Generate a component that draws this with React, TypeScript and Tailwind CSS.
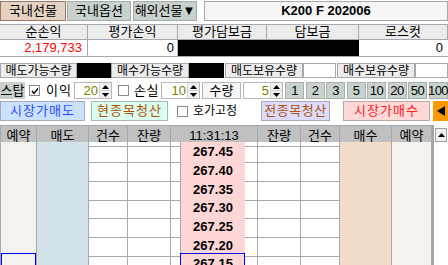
// 선물 주문 화면 — 상단 계좌 정보 + 호가 그리드

const FONT = "font-['Liberation_Sans','Noto_Sans_CJK_KR',sans-serif]"

const PRICES = ['267.45', '267.40', '267.35', '267.30', '267.25', '267.20', '267.15']
const ROW_H = ['h-[19px]', 'h-[19px]', 'h-[18px]', 'h-[19px]', 'h-[19px]', 'h-[18px]', 'h-[19px]']

const COLS =
  'grid grid-cols-[37px_52px_39px_43px_10px_64px_13px_43px_39px_52px_40px]'

function Check({ checked }: { checked?: boolean }) {
  return (
    <div className="w-[11px] h-[11px] shrink-0 border border-[#8a8a8a] bg-white flex items-center justify-center">
      {checked && (
        <svg width="8" height="8" viewBox="0 0 8 8">
          <path d="M1 4 L3 6.5 L7 1.5" fill="none" stroke="#000" strokeWidth="1.4" />
        </svg>
      )}
    </div>
  )
}

function Spin({ value, w }: { value: string; w: string }) {
  return (
    <div className={`flex h-[17px] shrink-0 border border-[#b8b8b8] bg-white ${w}`}>
      <div className="flex-1 text-right pr-[1px] text-[#808000] text-[13px] leading-[15px]">
        {value}
      </div>
      <div className="w-[12px] flex flex-col border-l border-[#d4d4d4] bg-[#f0f0f0]">
        <div className="flex-1 flex items-center justify-center">
          <svg width="7" height="4" viewBox="0 0 7 4">
            <path d="M0 4 L3.5 0 L7 4Z" fill="#000" />
          </svg>
        </div>
        <div className="flex-1 flex items-center justify-center border-t border-[#d4d4d4]">
          <svg width="7" height="4" viewBox="0 0 7 4">
            <path d="M0 0 L7 0 L3.5 4Z" fill="#000" />
          </svg>
        </div>
      </div>
    </div>
  )
}

function Label({ text, w }: { text: string; w: string }) {
  return (
    <div
      className={`h-full shrink-0 flex items-center justify-center whitespace-nowrap bg-[#ececec] border border-[#a8a8a8] ${w}`}
    >
      {text}
    </div>
  )
}

export default function App() {
  return (
    <div className={`w-[448px] h-[265px] overflow-hidden bg-white text-black text-[12px] ${FONT}`}>
      {/* 탭 + 종목 */}
      <div className="flex h-[21px] pt-[1px]">
        <div className="w-[66px] h-[20px] flex items-center justify-center bg-[#e6d2c2] border border-[#a07464] text-[13px]">
          국내선물
        </div>
        <div className="ml-[1px] w-[64px] h-[20px] flex items-center justify-center bg-[#c8d2cc] border border-[#a4aca8] text-[13px]">
          국내옵션
        </div>
        <div className="ml-[2px] w-[64px] h-[20px] flex items-center justify-center bg-[#c8d2cc] border border-[#a4aca8] text-[13px]">
          해외선물▼
        </div>
        <div className="ml-[7px] flex-1 h-[20px] flex items-center justify-center bg-[#f6f6f6] border border-[#a8a8a8] font-bold text-[13px]">
          K200 F 202006
        </div>
      </div>

      {/* 손익 요약 */}
      <div className="mt-[3px] grid grid-cols-[88px_90px_89px_92px_89px]">
        {['순손익', '평가손익', '평가담보금', '담보금', '로스컷'].map((t) => (
          <div
            key={t}
            className="h-[16px] flex items-center justify-center bg-[#ececec] border-t border-b border-r border-[#a8a8b4] text-[13px]"
          >
            {t}
          </div>
        ))}
        <div className="h-[17px] flex items-center justify-end pr-[5px] border-b border-r border-[#a8a8b4] text-[#ff0000] text-[13px]">
          2,179,733
        </div>
        <div className="h-[17px] flex items-center justify-end pr-[3px] border-b border-r border-[#a8a8b4] text-[13px]">
          0
        </div>
        <div className="h-[17px] col-span-2 bg-black border-b border-[#a8a8b4]" />
        <div className="h-[17px] flex items-center justify-end pr-[5px] border-b border-[#a8a8b4] text-[13px]">
          0
        </div>
      </div>

      {/* 수량 */}
      <div className="mt-[6px] flex h-[15px]">
        <Label text="매도가능수량" w="w-[77px]" />
        <div className="w-[34px] h-full bg-black" />
        <Label text="매수가능수량" w="w-[78px]" />
        <div className="w-[35px] h-full bg-black" />
        <Label text="매도보유수량" w="ml-[1px] w-[78px]" />
        <div className="w-[33px] h-full bg-white border border-[#a8a8a8]" />
        <Label text="매수보유수량" w="ml-[1px] w-[78px]" />
        <div className="flex-1 h-full bg-white border border-[#a8a8a8]" />
      </div>

      {/* 스탑 설정 */}
      <div className="mt-[4px] flex items-center h-[17px] whitespace-nowrap">
        <div className="w-[25px] h-full flex items-center justify-center bg-[#c8d2cc] text-[13px]">
          스탑
        </div>
        <div className="ml-[4px]">
          <Check checked />
        </div>
        <div className="ml-[6px] w-[28px] text-[13px] tracking-[1px]">이익</div>
        <Spin value="20" w="w-[38px]" />
        <div className="ml-[6px]">
          <Check />
        </div>
        <div className="ml-[5px] w-[27px] text-[13px] tracking-[0.5px]">손실</div>
        <Spin value="10" w="w-[39px]" />
        <div className="ml-[2px] w-[39px] h-full flex items-center justify-center bg-[#f6f6f6] border border-[#b8b8b8] text-[13px]">
          수량
        </div>
        <div className="ml-[2px]">
          <Spin value="5" w="w-[40px]" />
        </div>
        <div className="ml-[2px] flex gap-[1.5px] h-full">
          {['1', '2', '3', '5', '10', '20', '50', '100'].map((n) => (
            <div
              key={n}
              className="w-[19px] h-full flex items-center justify-center bg-[#c8d2cc] border border-[#a8b0ac] text-[13px] tracking-[-0.5px]"
            >
              {n}
            </div>
          ))}
        </div>
      </div>

      {/* 주문 버튼 */}
      <div className="mt-[2px] flex items-center h-[20px] text-[13px] whitespace-nowrap">
        <div className="w-[85px] h-full flex items-center justify-center bg-[#cce0ff] border border-[#a8a8b8] text-[#1e50ff] tracking-[1px]">
          시장가매도
        </div>
        <div className="ml-[6px] w-[77px] h-full flex items-center justify-center bg-[#d8fff0] border border-[#a8b8b0] text-[#b05000] tracking-[1px]">
          현종목청산
        </div>
        <div className="ml-[9px]">
          <Check />
        </div>
        <div className="ml-[5px] w-[48px] text-[12px]">호가고정</div>
        <div className="ml-[20px] w-[69px] h-full flex items-center justify-center bg-[#dcdcff] border border-[#a8a8b8] text-[#b05000] tracking-[0.5px]">
          전종목청산
        </div>
        <div className="ml-[13px] w-[87px] h-full flex items-center justify-center bg-[#ffd8d8] border border-[#b8a8a8] text-[#ff2020] tracking-[1px]">
          시장가매수
        </div>
        <div className="ml-[3px] w-[15px] h-full flex items-center justify-center bg-[#ff9900]">
          <svg width="8" height="10" viewBox="0 0 8 10">
            <path d="M8 0 L0 5 L8 10Z" fill="#000" />
          </svg>
        </div>
      </div>

      {/* 호가 그리드 */}
      <div className="mt-[4px] flex">
        <div className="w-[432px]">
          <div className={`${COLS} h-[17px] bg-[#c0c0c0] border-t border-[#a8a8b4] text-[13px]`}>
            {['예약', '매도', '건수', '잔량'].map((t, i) => (
              <div
                key={i}
                className={`flex items-center justify-center border-r border-b border-[#a8a8b4] ${i === 0 ? 'border-l' : ''}`}
              >
                {t}
              </div>
            ))}
            <div className="col-span-3 flex items-center justify-center border-r border-b border-[#a8a8b4]">
              11:31:13
            </div>
            {['잔량', '건수', '매수', '예약'].map((t, i) => (
              <div
                key={i}
                className="flex items-center justify-center border-r border-b border-[#a8a8b4]"
              >
                {t}
              </div>
            ))}
          </div>

          {PRICES.map((p, r) => {
            const sel = r === PRICES.length - 1
            return (
              <div key={p} className={`${COLS} ${ROW_H[r]}`}>
                <div className="relative bg-[#f5f2ee] border-l border-r border-b border-[#a8a8b4]">
                  {sel && <div className="absolute left-0 -top-px right-0 bottom-0 border border-[#0000ff]" />}
                </div>
                <div className="bg-[#d2e2e8] border-r border-b border-[#a8a8b4]" />
                <div className="border-r border-b border-[#a8a8b4]" />
                <div className="border-r border-b border-[#a8a8b4]" />
                <div className="border-r border-b border-[#a8a8b4]" />
                <div className="relative flex items-center justify-center bg-[#ffd6d6] border-b border-[#a8a8b4] font-bold text-[13px]">
                  {sel && <div className="absolute -left-px -top-px right-0 bottom-0 border border-[#0000ff]" />}
                  {p}
                </div>
                <div className="border-r border-b border-[#a8a8b4]" />
                <div className="border-r border-b border-[#a8a8b4]" />
                <div className="border-r border-b border-[#a8a8b4]" />
                <div className="bg-[#f0dcc8] border-r border-b border-[#a8a8b4]" />
                <div className="bg-[#f5f2ee] border-r border-b border-[#a8a8b4]" />
              </div>
            )
          })}
        </div>

        {/* 스크롤바 */}
        <div className="w-[16px] border-l-2 border-[#a4a4a8] bg-white">
          <div className="mt-[3px] ml-[1px] w-[12px] h-[14px] flex items-center justify-center border border-[#a0a0a0] bg-[#f0f0f0]">
            <svg width="7" height="4" viewBox="0 0 7 4">
              <path d="M0 4 L3.5 0 L7 4Z" fill="#000" />
            </svg>
          </div>
        </div>
      </div>
    </div>
  )
}
